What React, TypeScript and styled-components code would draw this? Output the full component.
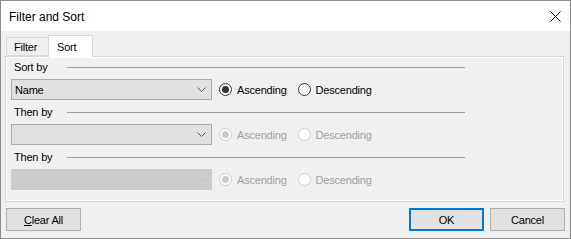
import React from "react";
import styled, { createGlobalStyle } from "styled-components";

const GlobalStyle = createGlobalStyle`
  html, body {
    margin: 0;
    padding: 0;
    background: #ffffff;
  }
  * {
    box-sizing: border-box;
  }
`;

const Window = styled.div`
  width: 571px;
  height: 239px;
  border: 1px solid #8c8c8c;
  display: flex;
  flex-direction: column;
  font-family: "Liberation Sans", Arial, sans-serif;
  font-size: 11px;
  letter-spacing: -0.2px;
  color: #000;
  background: #f0f0f0;
`;

const TitleBar = styled.div`
  height: 30px;
  background: #ffffff;
  display: flex;
  align-items: center;
  justify-content: space-between;
  padding: 1px 9px 0 8px;
  font-size: 12px;
  letter-spacing: 0;
`;

const CloseIcon = styled.svg`
  width: 11px;
  height: 11px;
`;

const Body = styled.div`
  flex: 1;
  display: flex;
  flex-direction: column;
  padding: 4px 6px 0 4px;
`;

const TabStrip = styled.div`
  display: flex;
  align-items: flex-end;
  height: 21px;
  padding-left: 1px;
  position: relative;
  z-index: 1;
`;

const Tab = styled.div<{ $active?: boolean }>`
  width: ${({ $active }) => ($active ? "45px" : "43px")};
  height: ${({ $active }) => ($active ? "22px" : "19px")};
  margin-bottom: ${({ $active }) => ($active ? "-1px" : "0")};
  padding: ${({ $active }) => ($active ? "1px 0 0 8px" : "1px 0 0 7px")};
  margin-left: ${({ $active }) => ($active ? "-1px" : "0")};
  border: 1px solid #d9d9d9;
  border-bottom: ${({ $active }) => ($active ? "none" : "1px solid #d9d9d9")};
  background: ${({ $active }) => ($active ? "#ffffff" : "#f0f0f0")};
  display: flex;
  align-items: center;
  white-space: nowrap;
`;

const Panel = styled.div`
  height: 146px;
  border: 1px solid #d9d9d9;
  box-shadow: inset 0 0 0 1px #ffffff;
  padding: 3px 0 0 0;
  display: flex;
  flex-direction: column;
`;

const Section = styled.div`
  display: flex;
  flex-direction: column;
  gap: 5px;
  margin-bottom: 5px;
`;

const SectionHeader = styled.div`
  display: grid;
  grid-template-columns: 53px 398px;
  align-items: center;
  height: 14px;
  padding-left: 8px;
`;

const Rule = styled.div`
  height: 1px;
  background: #a0a0a0;
`;

const Row = styled.div`
  display: flex;
  align-items: center;
  padding-left: 5px;
  height: 21px;
`;

const Combo = styled.div<{ $disabled?: boolean }>`
  width: 201px;
  height: 21px;
  border: 1px solid ${({ $disabled }) => ($disabled ? "#cccccc" : "#adadad")};
  background: ${({ $disabled }) => ($disabled ? "#cccccc" : "#e1e1e1")};
  display: flex;
  align-items: center;
  justify-content: space-between;
  padding: 0 5px 0 3px;
  color: #000;
`;

const Chevron = styled.svg`
  width: 9px;
  height: 5px;
`;

const RadioGroup = styled.div`
  display: flex;
  align-items: center;
  gap: 11px;
  margin-left: 7px;
`;

const RadioItem = styled.label<{ $disabled?: boolean }>`
  display: flex;
  align-items: center;
  gap: 5px;
  color: ${({ $disabled }) => ($disabled ? "#a0a0a0" : "#000")};
`;

const RadioCircle = styled.span<{ $checked?: boolean; $disabled?: boolean }>`
  width: 13px;
  height: 13px;
  border-radius: 50%;
  border: 1px solid ${({ $disabled }) => ($disabled ? "#cccccc" : "#333333")};
  background: #ffffff;
  display: flex;
  align-items: center;
  justify-content: center;
  &::after {
    content: "";
    width: 7px;
    height: 7px;
    border-radius: 50%;
    background: ${({ $checked, $disabled }) =>
      $checked ? ($disabled ? "#cccccc" : "#333333") : "transparent"};
  }
`;

const Footer = styled.div`
  display: flex;
  align-items: center;
  justify-content: space-between;
  padding: 6px 0 0 1px;
  margin-right: -1px;
`;

const ButtonGroup = styled.div`
  display: flex;
  gap: 6px;
`;

const Button = styled.button<{ $default?: boolean }>`
  width: 75px;
  height: 23px;
  font-family: "Liberation Sans", Arial, sans-serif;
  font-size: 11px;
  letter-spacing: -0.2px;
  color: #000;
  background: #e1e1e1;
  border: ${({ $default }) =>
    $default ? "2px solid #0078d7" : "1px solid #adadad"};
  padding: 0;
  margin: 0;
  u {
    text-decoration: underline;
  }
`;

type RadioProps = { label: string; checked?: boolean; disabled?: boolean };

const Radio = ({ label, checked, disabled }: RadioProps) => (
  <RadioItem $disabled={disabled}>
    <RadioCircle $checked={checked} $disabled={disabled} />
    {label}
  </RadioItem>
);

type SortRowProps = {
  title: string;
  value?: string;
  comboDisabled?: boolean;
  radiosDisabled?: boolean;
};

const SortRow = ({ title, value, comboDisabled, radiosDisabled }: SortRowProps) => (
  <Section>
    <SectionHeader>
      <span>{title}</span>
      <Rule />
    </SectionHeader>
    <Row>
      <Combo $disabled={comboDisabled}>
        <span>{value}</span>
        <Chevron viewBox="0 0 9 5">
          <path
            d="M0.5 0.5 L4.5 4.5 L8.5 0.5"
            fill="none"
            stroke={comboDisabled ? "#bfbfbf" : "#555555"}
            strokeWidth="1"
          />
        </Chevron>
      </Combo>
      <RadioGroup>
        <Radio label="Ascending" checked disabled={radiosDisabled} />
        <Radio label="Descending" disabled={radiosDisabled} />
      </RadioGroup>
    </Row>
  </Section>
);

const App = () => {
  return (
    <>
      <GlobalStyle />
      <Window>
        <TitleBar>
          <span>Filter and Sort</span>
          <CloseIcon viewBox="0 0 11 11">
            <path d="M0.5 0.5 L10.5 10.5 M10.5 0.5 L0.5 10.5" stroke="#000" strokeWidth="1" />
          </CloseIcon>
        </TitleBar>
        <Body>
          <TabStrip>
            <Tab>Filter</Tab>
            <Tab $active>Sort</Tab>
          </TabStrip>
          <Panel>
            <SortRow title="Sort by" value="Name" />
            <SortRow title="Then by" radiosDisabled />
            <SortRow title="Then by" comboDisabled radiosDisabled />
          </Panel>
          <Footer>
            <Button>
              <u>C</u>lear All
            </Button>
            <ButtonGroup>
              <Button $default>OK</Button>
              <Button>Cancel</Button>
            </ButtonGroup>
          </Footer>
        </Body>
      </Window>
    </>
  );
};

export default App;
